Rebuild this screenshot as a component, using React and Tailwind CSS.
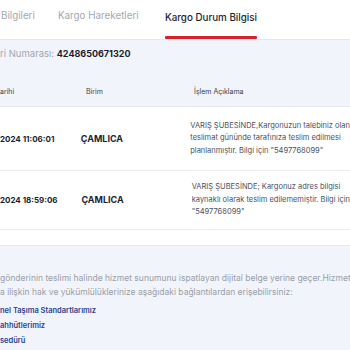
export default function App() {
  const font = { fontFamily: 'Inter, "Noto Sans", sans-serif' };
  return (
    <div style={font} className="w-[350px] h-[350px] overflow-hidden bg-[#f1f4fa] whitespace-nowrap">
      {/* Tabs */}
      <div className="h-[40px] bg-white border-b border-[#e4e7ee] flex items-stretch">
        <div className="w-[58px] pl-[1px] flex items-center pb-[6px] text-[9.8px] text-[#a3a7b0]">Bilgileri</div>
        <div className="w-[107px] flex items-center pb-[6px] text-[9.8px] text-[#a3a7b0]">Kargo Hareketleri</div>
        <div className="w-[92px] flex flex-col">
          <div className="flex-1 flex items-center justify-center pt-[1px] text-[9.8px] font-medium text-[#1b1f33]">Kargo Durum Bilgisi</div>
          <div className="h-[3px] bg-[#d8222c] rounded-[1px]"></div>
        </div>
      </div>

      {/* Number + header */}
      <div className="h-[67px] border-b border-[#e4e7ee] flex flex-col">
        <div className="pt-[8px] h-[12px] leading-[12px] text-[9.5px] text-[#a3a7b0] box-content">
          ri Numarası: <span className="font-bold text-[9px] text-[#1b1f33]">4248650671320</span>
        </div>
        <div className="mt-[26px] flex text-[7px] leading-[12px] text-[#3b3f4c]">
          <div className="w-[86px]">arihi</div>
          <div className="w-[108px]">Birim</div>
          <div>İşlem Açıklama</div>
        </div>
      </div>

      {/* Rows */}
      <div className="bg-white">
        <div className="h-[64px] border-b border-[#eceef3] flex items-center">
          <div className="w-[82px] text-[8px] font-bold text-[#1b1f33]">2024 11:06:01</div>
          <div className="w-[111px] text-[9px] font-bold text-[#1b1f33]">ÇAMLICA</div>
          <div className="text-[7.5px] leading-[12.5px] text-[#4a4f5e]">
            <div>VARIŞ ŞUBESİNDE,Kargonuzun talebiniz olan</div>
            <div>teslimat gününde tarafınıza teslim edilmesi</div>
            <div>planlanmıştır. Bilgi için "5497768099"</div>
          </div>
        </div>
        <div className="h-[59px] border-b border-[#eceef3] flex items-center">
          <div className="w-[82px] text-[8px] font-bold text-[#1b1f33]">2024 18:59:06</div>
          <div className="w-[111px] text-[9px] font-bold text-[#1b1f33]">ÇAMLICA</div>
          <div className="text-[7.5px] leading-[12.5px] text-[#4a4f5e]">
            <div>VARIŞ ŞUBESİNDE; Kargonuz adres bilgisi</div>
            <div>kaynaklı olarak teslim edilememiştir. Bilgi için</div>
            <div>"5497768099"</div>
          </div>
        </div>
        <div className="h-[16px] border-b border-[#e4e7ee]"></div>
      </div>

      {/* Footer */}
      <div className="pt-[25px] text-[8.5px] leading-[14px] text-[#9a9ea9]">
        <div>gönderinin teslimi halinde hizmet sunumunu ispatlayan dijital belge yerine geçer.Hizmet</div>
        <div>a ilişkin hak ve yükümlülüklerinize aşağıdaki bağlantılardan erişebilirsiniz:</div>
        <div className="mt-[6px] flex flex-col gap-[3px] text-[7.5px] leading-[12px] font-semibold text-[#2b3f92]">
          <div>nel Taşıma Standartlarımız</div>
          <div>ahhütlerimiz</div>
          <div>sedürü</div>
        </div>
      </div>
    </div>
  );
}
